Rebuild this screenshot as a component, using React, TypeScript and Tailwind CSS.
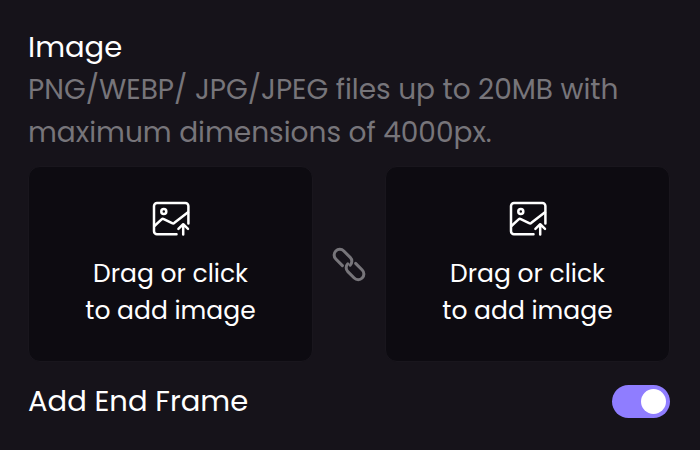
import { useState } from "react";

function ImageUploadIcon() {
  return (
    <svg
      className="size-10"
      viewBox="0 0 40 40"
      fill="none"
      stroke="currentColor"
      strokeWidth="2.5"
      strokeLinecap="round"
      strokeLinejoin="round"
      aria-hidden="true"
    >
      <path d="M25.5 35.2H6a3 3 0 0 1-3-3V7a3 3 0 0 1 3-3h28.4a3 3 0 0 1 3 3v17.5" />
      <circle cx="12.8" cy="12.4" r="2.5" />
      <path d="M3.4 27l7.2-6.6a2 2 0 0 1 2.2-.3l8.3 4.1a2 2 0 0 0 2.3-.4L37 13.2" />
      <path d="M32.2 35.6V26M27.4 29.8l4.8-4.6 4.8 4.6" />
    </svg>
  );
}

function ChainIcon() {
  return (
    <svg
      className="size-9 text-[#77757a]"
      viewBox="0 0 36 36"
      fill="none"
      stroke="currentColor"
      strokeWidth="3"
      strokeLinecap="round"
      strokeLinejoin="round"
      aria-hidden="true"
    >
      <path d="M11.4 19.6L4.8 13a5.6 5.6 0 0 1 0-8 5.6 5.6 0 0 1 8 0l6.4 6.4a5.5 5.5 0 0 1 0 7.8" />
      <path d="M24.6 17.4l6.6 6.6a5.6 5.6 0 0 1 0 8 5.6 5.6 0 0 1-8 0l-6.4-6.4a5.5 5.5 0 0 1 0-7.8" />
    </svg>
  );
}

function UploadBox() {
  return (
    <button
      type="button"
      className="flex min-w-0 flex-1 cursor-pointer flex-col items-center rounded-xl border border-[#19161d] bg-[#0d0b11] pt-8 pb-8 text-[25px] leading-[37px] text-white"
    >
      <ImageUploadIcon />
      <span className="mt-4">
        Drag or click
        <br />
        to add image
      </span>
    </button>
  );
}

export default function App() {
  const [endFrame, setEndFrame] = useState(true);

  return (
    <main className="min-h-screen bg-[#16131a] pt-[26px] pr-[30px] pl-7 font-[Poppins,Inter,sans-serif] text-[29px] leading-[42px] text-white">
      <h2>Image</h2>
      <p className="text-[28px] leading-[43px] text-[#77757a]">
        PNG/WEBP/ JPG/JPEG files up to 20MB with maximum dimensions of 4000px.
      </p>

      <div className="mt-3 flex items-center">
        <UploadBox />
        <div className="flex w-[72px] justify-center">
          <ChainIcon />
        </div>
        <UploadBox />
      </div>

      <div className="mt-4.5 flex items-center justify-between">
        <label htmlFor="end-frame">Add End Frame</label>
        <input
          id="end-frame"
          type="checkbox"
          role="switch"
          checked={endFrame}
          onChange={(e) => setEndFrame(e.target.checked)}
          className="flex h-[33px] w-[58px] cursor-pointer appearance-none items-center rounded-full bg-[#3a3740] px-1 before:size-[25px] before:rounded-full before:bg-white before:content-[''] checked:justify-end checked:bg-[#8f7dff]"
        />
      </div>
    </main>
  );
}
